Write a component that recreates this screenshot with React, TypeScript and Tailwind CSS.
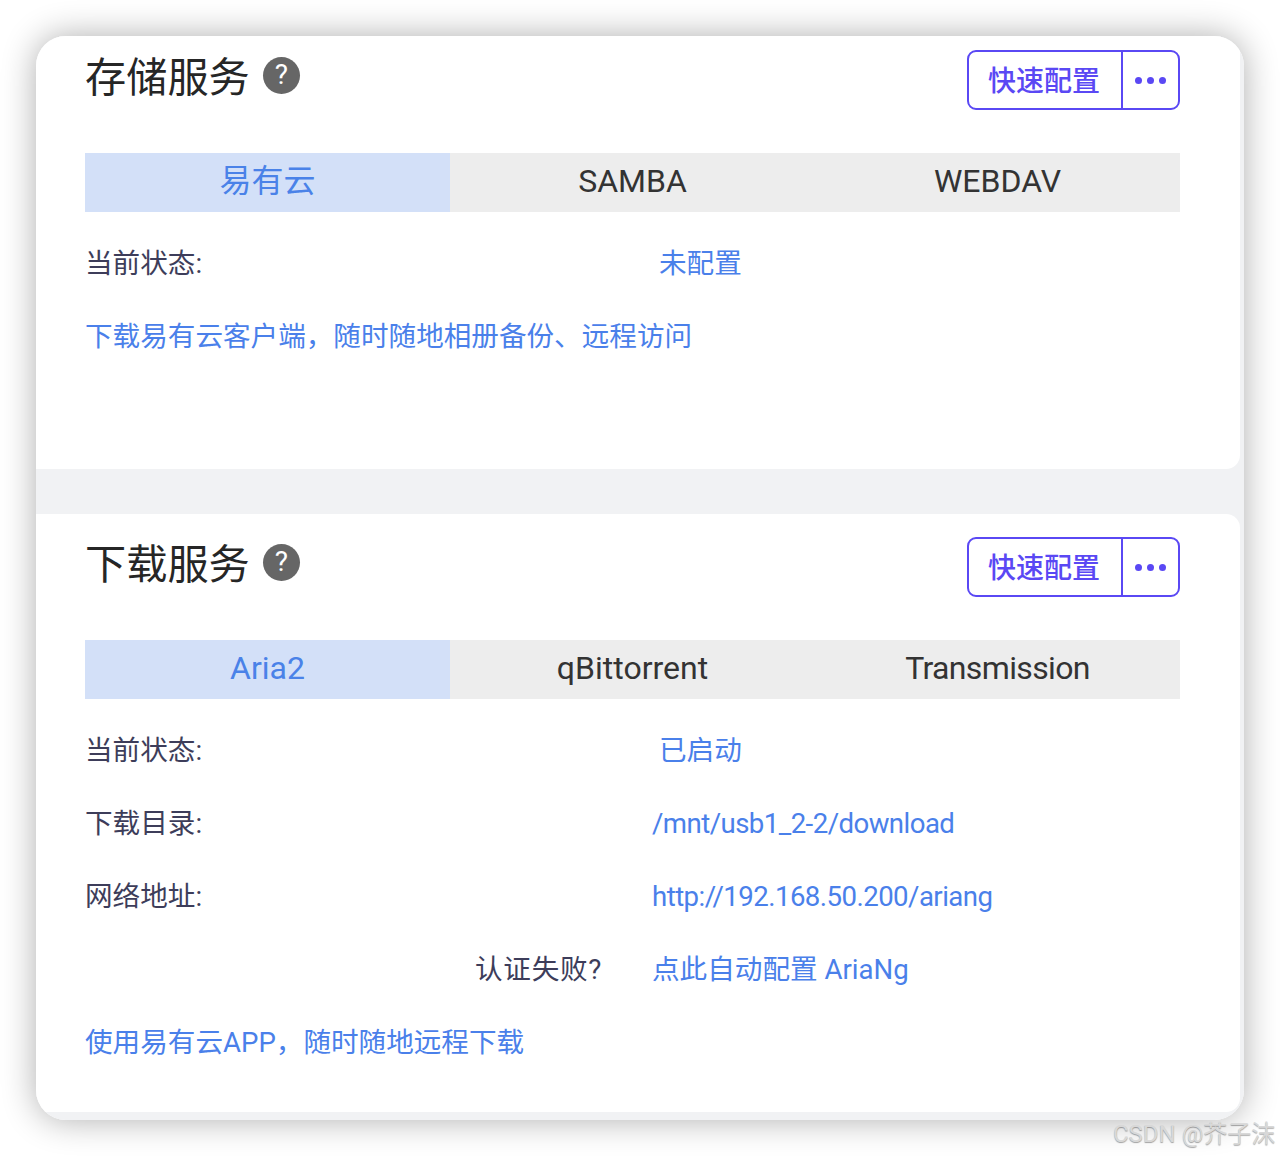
const font = { fontFamily: 'Roboto, "Noto Sans CJK SC", sans-serif' }

function ConfigButton() {
  return (
    <div className="flex h-[60px] w-[213px] rounded-[9px] border-2 border-[#5a48f4] text-[#5a48f4]">
      <div className="flex w-[154px] items-center justify-center border-r-2 border-[#5a48f4] pr-[2px] pt-[3px] text-[28px] font-medium">
        快速配置
      </div>
      <div className="flex flex-1 items-center justify-center gap-[5px]">
        <span className="h-[7px] w-[7px] rounded-full bg-[#5a48f4]" />
        <span className="h-[7px] w-[7px] rounded-full bg-[#5a48f4]" />
        <span className="h-[7px] w-[7px] rounded-full bg-[#5a48f4]" />
      </div>
    </div>
  )
}

function Header({ title }: { title: string }) {
  return (
    <div className="flex items-start justify-between">
      <div className="flex h-[60px] items-center">
        <span className="mb-[2px] text-[41.2px] leading-none text-[#262626]">{title}</span>
        <span className="mb-[10px] ml-[13px] flex h-[37px] w-[37px] items-center justify-center rounded-full bg-[#666666] text-[28px] font-normal leading-none text-white">
          ?
        </span>
      </div>
      <ConfigButton />
    </div>
  )
}

function Tabs({ items }: { items: string[] }) {
  return (
    <div className="mt-[43px] grid h-[59px] grid-cols-3 bg-[#ededed] text-[32px] text-[#333333]">
      {items.map((item, i) => (
        <div
          key={item}
          className={
            i === 0
              ? 'flex items-center justify-center bg-[#d3e0f8] pb-[3px] text-[#4a82e8]'
              : item === 'Transmission'
                ? 'flex items-center justify-center pb-[3px] tracking-[-0.65px]'
                : 'flex items-center justify-center pb-[3px]'
          }
        >
          {item}
        </div>
      ))}
    </div>
  )
}

function Row({
  label,
  value,
  right,
  inset,
  tight,
}: {
  label: string
  value: string
  right?: boolean
  inset?: boolean
  tight?: boolean
}) {
  return (
    <div className="flex h-[73px] items-center text-[27.6px]">
      <div
        className={
          right ? 'w-[517px] text-right tracking-[0.7px] text-[#3d3d5a]' : 'w-[517px] text-[#3d3d5a]'
        }
      >
        {label}
      </div>
      <div className={inset ? 'ml-[57px] text-[#4a80ea]' : 'ml-[50px] text-[#4a80ea]'}>
        <span className={tight ? 'tracking-[-0.55px]' : ''}>{value}</span>
      </div>
    </div>
  )
}

function Note({ text }: { text: string }) {
  return <div className="flex h-[73px] items-center pt-[1px] text-[27.6px] text-[#4a80ea]">{text}</div>
}

export default function App() {
  return (
    <div className="relative h-[1156px] w-[1280px] bg-white" style={font}>
      {/* Window */}
      <div className="absolute left-[36px] top-[36px] h-[1084px] w-[1208px] rounded-[30px] shadow-[0_0_34px_rgba(0,0,0,0.32)]">
        <div className="flex h-full flex-col overflow-hidden rounded-[30px] bg-[#f1f2f4] pr-[4px]">
          {/* Storage */}
          <section className="h-[433px] rounded-br-[14px] bg-white pl-[49px] pr-[60px] pt-[14px]">
            <Header title="存储服务" />
            <Tabs items={['易有云', 'SAMBA', 'WEBDAV']} />
            <div className="mt-[15px]">
              <Row label="当前状态:" value="未配置" inset />
              <Note text={'下载易有云客户端\uFF0C随时随地相册备份、远程访问'} />
            </div>
          </section>

          {/* Download */}
          <section className="mt-[45px] h-[598px] rounded-r-[14px] bg-white pl-[49px] pr-[60px] pt-[23px]">
            <Header title="下载服务" />
            <Tabs items={['Aria2', 'qBittorrent', 'Transmission']} />
            <div className="mt-[15px]">
              <Row label="当前状态:" value="已启动" inset />
              <Row label="下载目录:" value="/mnt/usb1_2-2/download" tight />
              <Row label="网络地址:" value="http://192.168.50.200/ariang" tight />
              <Row label="认证失败?" value="点此自动配置 AriaNg" right />
              <Note text={'使用易有云APP\uFF0C随时随地远程下载'} />
            </div>
          </section>
        </div>
      </div>

      {/* Watermark */}
      <div className="absolute left-[1113px] top-[1117px] whitespace-nowrap text-[24px] leading-[34px] text-[#d8d8d8] [text-shadow:0_1px_1px_rgba(0,0,0,0.35)]">
        CSDN @芥子沫
      </div>
    </div>
  )
}
